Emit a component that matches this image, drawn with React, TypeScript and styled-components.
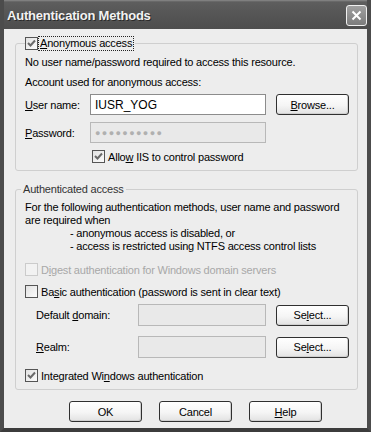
import React from 'react';
import styled, { createGlobalStyle, css } from 'styled-components';

const GlobalStyle = createGlobalStyle`
    html, body {
        margin: 0;
        padding: 0;
        background: #ececec;
    }
    body {
        font-family: Tahoma, "Liberation Sans", Arial, sans-serif;
        font-size: 11px;
        letter-spacing: -0.2px;
        color: #000;
    }
`;

const FRAME = '#4c4c4c';

const Window = styled.div`
    width: 371px;
    height: 432px;
    box-sizing: border-box;
    display: flex;
    flex-direction: column;
    background: #ededed;
    border-left: 4px solid ${FRAME};
    border-right: 4px solid ${FRAME};
    border-bottom: 4px solid #3c3c3c;
    overflow: hidden;
`;
const TitleBar = styled.div`
    height: 29px;
    margin: 0 -4px;
    padding: 0 4px 0 7px;
    display: flex;
    align-items: center;
    justify-content: space-between;
    background: linear-gradient(#8a8a8a 0, #5e5e5e 2px, #575757 40%, #4d4d4d 100%);
`;
const Title = styled.span`
    font-family: "Liberation Sans", Arial, sans-serif;
    font-weight: bold;
    font-size: 13px;
    letter-spacing: -0.2px;
    color: #f2f2f2;
    text-shadow: 1px 1px 0 #2a2a2a;
    padding-top: 2px;
`;
const CloseButton = styled.div`
    width: 19px;
    height: 19px;
    border: 1px solid #f0f0f0;
    border-radius: 3px;
    background: linear-gradient(#a0a0a0, #7c7c7c);
    display: flex;
    align-items: center;
    justify-content: center;
    margin-top: 2px;
`;
const Body = styled.div`
    flex: 1;
    padding: 7px 9px 0 11px;
    display: flex;
    flex-direction: column;
`;
const Group = styled.fieldset<{ $gap?: number }>`
    margin: ${(p) => p.$gap ?? 0}px 0 0;
    padding: 0 8px 7px 9px;
    border: 1px solid #cfcfcf;
    border-radius: 3px;
    min-width: 0;
`;
const Legend = styled.legend`
    margin-left: 0;
    padding: 0 2px 0 0;
    height: 15px;
    display: flex;
    align-items: center;
`;
const GrayLegend = styled.legend`
    margin-left: -4px;
    padding: 0 2px;
    height: 14px;
    line-height: 14px;
    color: #333;
`;
const Line = styled.div<{ $top?: number; $indent?: number }>`
    margin-top: ${(p) => p.$top ?? 0}px;
    padding-left: ${(p) => p.$indent ?? 0}px;
    line-height: ${(p) => (p.$indent !== undefined ? 13 : 14)}px;
    height: ${(p) => (p.$indent !== undefined ? 13 : 14)}px;
    white-space: nowrap;
`;
const Row = styled.div<{ $top: number; $label: number; $h?: number }>`
    margin-top: ${(p) => p.$top}px;
    height: ${(p) => p.$h ?? 21}px;
    display: grid;
    grid-template-columns: ${(p) => p.$label}px 1fr 73px;
    column-gap: 10px;
    align-items: center;
`;
const FieldLabel = styled.span<{ $indent?: number }>`
    padding-left: ${(p) => p.$indent ?? 0}px;
    white-space: nowrap;
`;
const Input = styled.div<{ $disabled?: boolean }>`
    height: 100%;
    box-sizing: border-box;
    border: 1px solid ${(p) => (p.$disabled ? '#b8b8b8' : '#8c8c8c')};
    background: ${(p) => (p.$disabled ? '#e9e9e9' : '#fff')};
    display: flex;
    align-items: center;
    padding-left: 4px;
    font-size: 12px;
    letter-spacing: 0;
    color: #000;
`;
const Dots = styled.span`
    color: #b0b0b0;
    font-size: 9px;
    letter-spacing: 1.4px;
`;
const buttonStyles = css`
    width: 73px;
    height: 21px;
    box-sizing: border-box;
    border: 1px solid #303030;
    border-radius: 3px;
    background: linear-gradient(#ffffff 0%, #f5f5f5 55%, #e2e2e2 100%);
    box-shadow: inset -1px -1px 0 #d0d0d0;
    display: flex;
    align-items: center;
    justify-content: center;
    font-size: 11px;
    color: #000;
`;
const Button = styled.div`
    ${buttonStyles};
`;
const ButtonBar = styled.div`
    margin-top: 11px;
    padding-left: 54px;
    display: flex;
    gap: 17px;
`;
const CheckRow = styled.div<{ $top: number; $indent?: number; $gray?: boolean }>`
    margin-top: ${(p) => p.$top}px;
    padding-left: ${(p) => p.$indent ?? 0}px;
    height: 13px;
    display: flex;
    align-items: center;
    gap: 3px;
    white-space: nowrap;
    color: ${(p) => (p.$gray ? '#a8a8a8' : '#000')};
`;
const Box = styled.span<{ $disabled?: boolean }>`
    width: 13px;
    height: 13px;
    box-sizing: border-box;
    flex: none;
    border: 1px solid ${(p) => (p.$disabled ? '#cbcbcb' : '#555')};
    background: ${(p) => (p.$disabled ? '#f2f2f2' : 'linear-gradient(135deg, #e2e2e2, #fbfbfb)')};
    display: flex;
    align-items: center;
    justify-content: center;
`;
const Focus = styled.span`
    margin-left: 1px;
    outline: 1px dotted #222;
    outline-offset: 0;
    padding: 0 1px;
    line-height: 13px;
`;
const U = styled.span`
    text-decoration: underline;
`;

type CheckProps = { checked?: boolean; disabled?: boolean };
const CheckBox: React.FC<CheckProps> = ({ checked, disabled }: CheckProps) => (
    <Box $disabled={disabled}>
        {checked && (
            <svg width="9" height="9" viewBox="0 0 9 9">
                <path d="M1 4 L3.5 6.5 L8 1.5" fill="none" stroke="#6a6a6a" strokeWidth="2" />
            </svg>
        )}
    </Box>
);

export default function App() {
    return (
        <>
            <GlobalStyle />
            <Window>
                <TitleBar>
                    <Title>Authentication Methods</Title>
                    <CloseButton>
                        <svg width="11" height="11" viewBox="0 0 11 11">
                            <path d="M1.5 1.5 L9.5 9.5 M9.5 1.5 L1.5 9.5" stroke="#fff" strokeWidth="2" />
                        </svg>
                    </CloseButton>
                </TitleBar>
                <Body>
                    <Group>
                        <Legend>
                            <CheckBox checked />
                            <Focus>
                                <U>A</U>nonymous access
                            </Focus>
                        </Legend>
                        <Line $top={4}>No user name/password required to access this resource.</Line>
                        <Line $top={6}>Account used for anonymous access:</Line>
                        <Row $top={5} $label={55}>
                            <FieldLabel>
                                <U>U</U>ser name:
                            </FieldLabel>
                            <Input>IUSR_YOG</Input>
                            <Button>
                                <span>
                                    <U>B</U>rowse...
                                </span>
                            </Button>
                        </Row>
                        <Row $top={7} $label={55}>
                            <FieldLabel>
                                <U>P</U>assword:
                            </FieldLabel>
                            <Input $disabled>
                                <Dots>●●●●●●●●●●</Dots>
                            </Input>
                            <span />
                        </Row>
                        <CheckRow $top={7} $indent={67}>
                            <CheckBox checked />
                            <span>
                                Allo<U>w</U> IIS to control password
                            </span>
                        </CheckRow>
                    </Group>
                    <Group $gap={11}>
                        <GrayLegend>Authenticated access</GrayLegend>
                        <Line $top={5} $indent={0}>
                            For the following authentication methods, user name and password
                        </Line>
                        <Line $indent={0}>are required when</Line>
                        <Line $indent={45}>- anonymous access is disabled, or</Line>
                        <Line $indent={45}>- access is restricted using NTFS access control lists</Line>
                        <CheckRow $top={10} $gray>
                            <CheckBox disabled />
                            <span>
                                D<U>i</U>gest authentication for Windows domain servers
                            </span>
                        </CheckRow>
                        <CheckRow $top={9}>
                            <CheckBox />
                            <span>
                                Ba<U>s</U>ic authentication (password is sent in clear text)
                            </span>
                        </CheckRow>
                        <Row $top={6} $label={103} $h={22}>
                            <FieldLabel $indent={11}>
                                Default <U>d</U>omain:
                            </FieldLabel>
                            <Input $disabled />
                            <Button>
                                <span>
                                    Se<U>l</U>ect...
                                </span>
                            </Button>
                        </Row>
                        <Row $top={10} $label={103} $h={22}>
                            <FieldLabel $indent={11}>
                                <U>R</U>ealm:
                            </FieldLabel>
                            <Input $disabled />
                            <Button>
                                <span>
                                    Se<U>l</U>ect...
                                </span>
                            </Button>
                        </Row>
                        <CheckRow $top={11}>
                            <CheckBox checked />
                            <span>
                                Integrated Wi<U>n</U>dows authentication
                            </span>
                        </CheckRow>
                    </Group>
                    <ButtonBar>
                        <Button>OK</Button>
                        <Button>Cancel</Button>
                        <Button>
                            <span>
                                <U>H</U>elp
                            </span>
                        </Button>
                    </ButtonBar>
                </Body>
            </Window>
        </>
    );
}
